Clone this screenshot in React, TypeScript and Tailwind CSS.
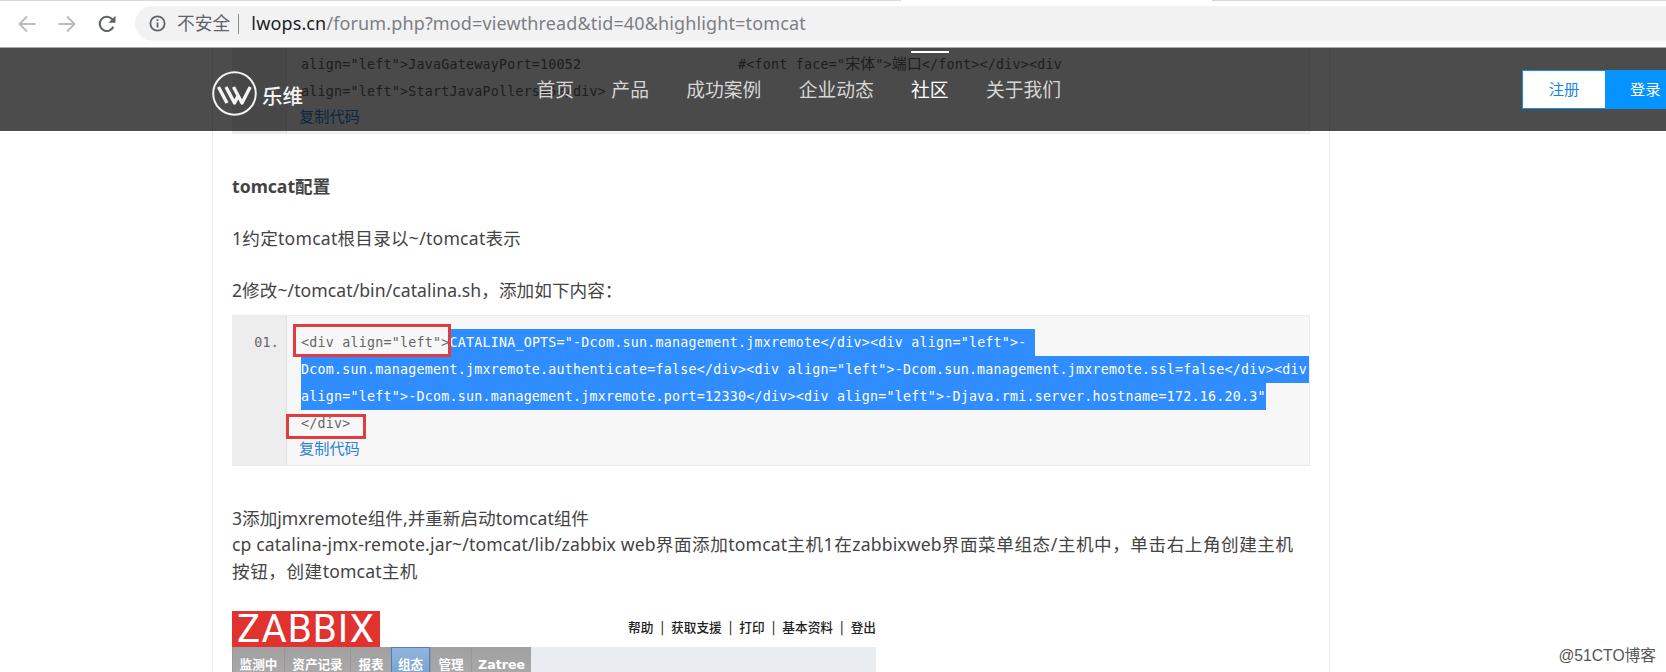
import type { ReactNode } from "react";

const navItems = ["首页", "产品", "成功案例", "企业动态", "社区", "关于我们"];
const zabbixLinks = ["帮助", "获取支援", "打印", "基本资料", "登出"];
const zabbixTabs = [
  { name: "监测中", width: "w-[52px]" },
  { name: "资产记录", width: "w-[66px]" },
  { name: "报表", width: "w-[41px]" },
  { name: "组态", width: "w-[39px]" },
  { name: "管理", width: "w-[41px]" },
  { name: "Zatree", width: "w-[60px]" },
];

function Toolbar() {
  return (
    <div className="flex flex-col h-[48px] shrink-0 bg-white border-b border-[#a8aaa8]">
      <div className="flex h-px shrink-0 justify-between bg-white">
        <div className="w-[901px] bg-[#d8d8d8]" />
        <div className="w-[454px] bg-[#d8d8d8]" />
      </div>
      <div className="mt-[5px] flex h-[35px] items-center pl-[17px]">
        <svg className="w-5 h-5 shrink-0 text-[#b9bbbd]" viewBox="0 0 20 20" fill="none" stroke="currentColor" strokeWidth="1.9">
          <path d="M18.5 10H3M10 2.5 2.5 10 10 17.5" />
        </svg>
        <svg className="ml-5 w-5 h-5 shrink-0 text-[#b9bbbd]" viewBox="0 0 20 20" fill="none" stroke="currentColor" strokeWidth="1.9">
          <path d="M1.5 10H17M10 2.5 17.5 10 10 17.5" />
        </svg>
        <svg className="ml-5 w-5 h-5 shrink-0 text-[#5f6368]" viewBox="0 0 20 20" fill="none" stroke="currentColor" strokeWidth="2.1">
          <path d="M16.3 12.8A7.1 7.1 0 1 1 15 5l2 2" />
          <path d="M18.5 1.8v7h-7z" fill="currentColor" stroke="none" />
        </svg>
        <div className="ml-[18px] flex h-[35px] flex-1 items-center rounded-l-full bg-[#f2f2f3] pl-[14px]">
          <svg className="w-[17px] h-[17px] shrink-0 text-[#5f6368]" viewBox="0 0 17 17" fill="none" stroke="currentColor" strokeWidth="1.8">
            <circle cx="8.5" cy="8.5" r="7.1" />
            <path d="M8.5 7.5v5M8.5 4.2v1.9" />
          </svg>
          <span className="ml-[11px] text-[17.8px] leading-none text-[#5f6368]">不安全</span>
          <span className="ml-[8px] h-[20px] w-px bg-[#8a8d91]" />
          <span className="ml-[12px] pb-[2px] text-[18px] leading-none tracking-[0.13px] whitespace-nowrap text-[#7b7f83]">
            <span className="text-[#202124]">lwops.cn</span>/forum.php?mod=viewthread&amp;tid=40&amp;highlight=tomcat
          </span>
        </div>
      </div>
    </div>
  );
}

function SiteHeader() {
  return (
    <header className="absolute inset-x-0 top-0 z-10 flex h-[83px] bg-black/70">
      <div className="ml-[212px] mt-[23px] flex h-[45px] w-[324.5px] items-center">
        <svg className="w-[45px] h-[45px] shrink-0" viewBox="0 0 45 45" fill="none" stroke="#f4f4f4">
          <circle cx="22.5" cy="22.5" r="21.3" strokeWidth="2" />
          <path d="M6.5 16 15 32M14 16l8.5 16 4-8M21.5 16 30 32l8.2-16" strokeWidth="3.4" strokeLinejoin="round" />
        </svg>
        <span className="ml-[5px] mt-1 font-['Noto_Sans_CJK_SC'] text-[20.5px] leading-none font-medium text-[#f4f4f4]">乐维</span>
      </div>
      <nav className="flex gap-[37.3px] pt-[3px]">
        {navItems.map((item) => (
          <a
            key={item}
            className={
              item === "社区"
                ? "h-[60px] border-t-2 border-white pt-[23px] text-[18.8px] leading-[28px] text-white"
                : "h-[60px] border-t-2 border-transparent pt-[23px] text-[18.8px] leading-[28px] text-[#d6d6d6]"
            }
          >
            {item}
          </a>
        ))}
      </nav>
      <div className="ml-auto mt-[22px] flex h-[39px] w-[144px] border border-r-0 border-[#0e92f0] text-[15.3px]">
        <a className="flex w-[82px] shrink-0 items-center justify-center bg-white pb-px text-[#1b86d6]">注册</a>
        <a className="flex flex-1 items-center bg-[#0493ff] pb-px pl-[25px] whitespace-nowrap text-white">登录</a>
      </div>
    </header>
  );
}

function CodeBlock({ gutter, children }: { gutter?: string; children: ReactNode }) {
  return (
    <div className="relative flex h-[151px] w-[1078px] border border-l-0 border-[#ececec] bg-[#f7f7f7]">
      <div className="w-[55px] shrink-0 border-r border-[#dfdfdf] bg-[#ededed] pt-[13px] pr-[7px] text-right font-['DejaVu_Sans_Mono'] text-[13.3px] leading-[27px] tracking-[0.24px] text-[#666]">
        {gutter}
      </div>
      <div className="pl-[14px] pt-[13px]">
        <pre className="font-['DejaVu_Sans_Mono','Noto_Sans_CJK_SC',monospace] text-[13.3px] leading-[27px] tracking-[0.24px] text-[#666]">
          {children}
        </pre>
        <a className="-ml-[2px] block text-[15.2px] leading-[23px] text-[#2a83d8]">复制代码</a>
      </div>
    </div>
  );
}

function Selected({ children }: { children: ReactNode }) {
  return <span className="inline-block h-[27px] bg-[#2f8dff] align-top text-white">{children}</span>;
}

// Chinese runs in the last paragraph sit a little wider than the Latin ones
function Wide({ children }: { children: ReactNode }) {
  return <span className="tracking-[0.55px]">{children}</span>;
}

function ZabbixShot() {
  return (
    <div className="mt-[27px] w-[644px]">
      <div className="flex h-[36px] justify-between">
        <div className="flex w-[148px] items-center justify-center bg-[#e2322f] font-[family-name:Roboto] text-[38.5px] leading-none tracking-[1.1px] text-white">
          ZABBIX
        </div>
        <div className="flex items-center pb-[6px] font-['Noto_Sans_CJK_SC'] text-[12.7px] font-medium text-[#222]">
          {zabbixLinks.map((link, i) => (
            <span key={link} className="whitespace-pre">
              {i > 0 && <span className="px-[7px]">|</span>}
              {link}
            </span>
          ))}
        </div>
      </div>
      <div className="flex h-[40px] bg-[#e9ecf1]">
        {zabbixTabs.map((tab) => (
          <div
            key={tab.name}
            className={`${tab.width} ${
              tab.name === "组态"
                ? "border-x border-t border-[#4f7fb5] bg-linear-to-b from-[#91b5dd] to-[#6f9acb] pt-[8px]"
                : "border-l border-[#989898] bg-linear-to-b from-[#a0a0a0] to-[#adadad] pt-[9px]"
            } h-full shrink-0 text-center font-['DejaVu_Sans','Noto_Sans_CJK_SC',sans-serif] text-[12.6px] leading-[18px] font-bold whitespace-nowrap text-white`}
          >
            {tab.name}
          </div>
        ))}
      </div>
    </div>
  );
}

export default function App() {
  return (
    <div className="flex h-[672px] w-[1666px] flex-col overflow-hidden bg-white font-['Noto_Sans','Noto_Sans_CJK_SC',sans-serif]">
      <Toolbar />
      <div className="relative flex-1 overflow-hidden">
        <SiteHeader />
        <main className="ml-[212px] h-full w-[1118px] overflow-hidden border-x border-[#ebebeb] pl-[19px] text-[17.6px] text-[#444]">
          <div className="-mt-[65px]">
            <CodeBlock>
              {"\n"}
              {"\n"}
              {'align="left">JavaGatewayPort=10052                   #<font face="'}
              <span className="text-[15px] tracking-normal">宋体</span>
              {'">'}
              <span className="text-[15px] tracking-normal">端口</span>
              {"</font></div><div\n"}
              {'align="left">StartJavaPollers=5</div>'}
            </CodeBlock>
          </div>
          <h2 className="mt-[39px] leading-[26px] font-bold">tomcat配置</h2>
          <p className="mt-[26px] leading-[26px] tracking-[0.24px]">1约定tomcat根目录以~/tomcat表示</p>
          <p className="mt-[26px] mb-[12px] leading-[26px] tracking-[0.06px]">2修改~/tomcat/bin/catalina.sh，添加如下内容：</p>
          <div className="relative">
            <CodeBlock gutter="01.">
              {'<div align="left">'}
              <Selected>{'CATALINA_OPTS="-Dcom.sun.management.jmxremote</div><div align="left">- '}</Selected>
              {"\n"}
              <Selected>
                <span className="pr-[2px]">{'Dcom.sun.management.jmxremote.authenticate=false</div><div align="left">-Dcom.sun.management.jmxremote.ssl=false</div><div'}</span>
              </Selected>
              {"\n"}
              <Selected>{'align="left">-Dcom.sun.management.jmxremote.port=12330</div><div align="left">-Djava.rmi.server.hostname=172.16.20.3"'}</Selected>
              {"\n</div>"}
            </CodeBlock>
            <div className="absolute top-[9px] left-[61px] h-[33px] w-[158px] border-3 border-[#e23b40]" />
            <div className="absolute top-[99px] left-[54px] h-[25px] w-[80px] border-3 border-[#e23b40]" />
          </div>
          <p className="mt-[39px] leading-[26.4px]">3添加jmxremote组件,并重新启动tomcat组件</p>
          <p className="leading-[26.4px] tracking-[0.14px] whitespace-nowrap">
            cp catalina-jmx-remote.jar~/tomcat/lib/zabbix web<Wide>界面添加</Wide>tomcat<Wide>主机1在</Wide>zabbixweb
            <Wide>界面菜单组态/主机中，单击右上角创建主机</Wide>
            <br />
            <Wide>按钮，创建</Wide>tomcat<Wide>主机</Wide>
          </p>
          <ZabbixShot />
        </main>
        <span className="absolute right-[10px] bottom-[6px] text-[15.7px] leading-[20px] font-['Liberation_Sans','Noto_Sans_CJK_SC',sans-serif] text-[#555]">
          @51CTO博客
        </span>
      </div>
    </div>
  );
}
